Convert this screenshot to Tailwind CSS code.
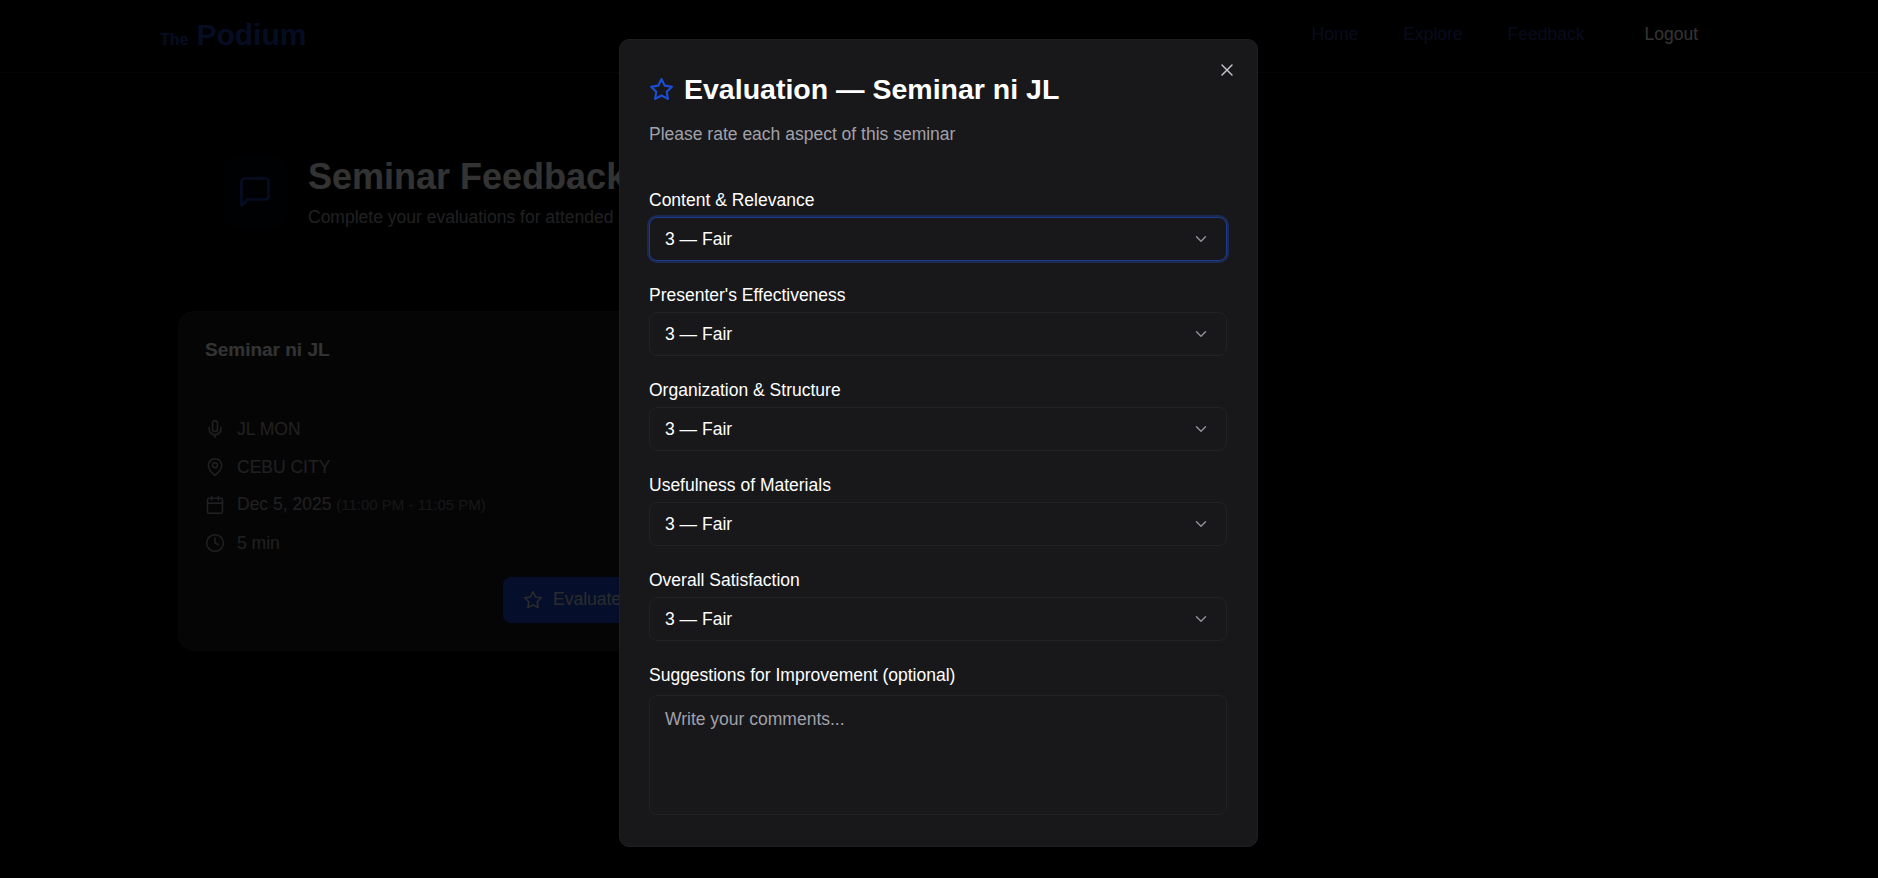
<!DOCTYPE html>
<html lang="en">
<head>
<meta charset="utf-8"/>
<title>Seminar Feedback - The Podium</title>
<script src="https://cdn.jsdelivr.net/npm/@tailwindcss/browser@4"></script>
</head>
<body class="relative h-[878px] overflow-hidden bg-black font-['Liberation_Sans',Arial,sans-serif] text-white">

<!-- page behind the dialog -->
<header class="h-[73px] border-b border-[#1c1c1f] pl-[160px] pr-[180px] flex items-center justify-between">
  <div class="flex items-baseline gap-[8px] font-bold text-[#1e40af]">
    <span class="text-[16px]">The</span>
    <span class="text-[30px] leading-none">Podium</span>
  </div>
  <nav class="flex items-center text-[17.5px] -mt-[3px]">
    <a class="text-[#1e3a8a]">Home</a>
    <a class="ml-[45px] text-[#1e3a8a]">Explore</a>
    <a class="ml-[45px] text-[#1e3a8a]">Feedback</a>
    <a class="ml-[60px] text-white">Logout</a>
  </nav>
</header>

<main class="pl-[178px]">
  <div class="mt-[82px] ml-[45px] flex items-center gap-[21px]">
    <div class="w-[64px] h-[70px] rounded-xl bg-[#1e3a8a]/10 flex items-center justify-center">
      <svg class="w-[36px] h-[36px] text-[#1e40af]" viewBox="0 0 24 24" fill="none" stroke="currentColor" stroke-width="1.8" stroke-linecap="round" stroke-linejoin="round"><path d="M21 15a2 2 0 0 1-2 2H7l-4 4V5a2 2 0 0 1 2-2h14a2 2 0 0 1 2 2z"/></svg>
    </div>
    <div>
      <h1 class="mb-[6px] text-[36px] leading-[44px] font-bold">Seminar Feedback</h1>
      <p class="text-[17.5px] leading-[24px] text-[#a1a1aa]">Complete your evaluations for attended seminars</p>
    </div>
  </div>

  <section class="mt-[82px] w-[520px] h-[340px] rounded-2xl border border-[#27272a] bg-[#1c1c1f] px-[26px] pt-[25px]">
    <h2 class="text-[19px] leading-[26px] font-bold">Seminar ni JL</h2>
    <ul class="mt-[54px] flex flex-col gap-[13.5px] text-[17.5px] leading-[24px] text-[#a1a1aa]">
      <li class="flex items-center gap-[12px]">
        <svg class="w-[20px] h-[20px]" viewBox="0 0 24 24" fill="none" stroke="currentColor" stroke-width="1.8" stroke-linecap="round" stroke-linejoin="round"><rect x="9" y="2" width="6" height="13" rx="3"/><path d="M19 10v2a7 7 0 0 1-14 0v-2M12 19v3"/></svg>
        <span>JL MON</span>
      </li>
      <li class="flex items-center gap-[12px]">
        <svg class="w-[20px] h-[20px]" viewBox="0 0 24 24" fill="none" stroke="currentColor" stroke-width="1.8" stroke-linecap="round" stroke-linejoin="round"><path d="M20 10c0 6-8 12-8 12s-8-6-8-12a8 8 0 0 1 16 0Z"/><circle cx="12" cy="10" r="3"/></svg>
        <span>CEBU CITY</span>
      </li>
      <li class="flex items-center gap-[12px]">
        <svg class="w-[20px] h-[20px]" viewBox="0 0 24 24" fill="none" stroke="currentColor" stroke-width="1.8" stroke-linecap="round" stroke-linejoin="round"><rect x="3" y="4" width="18" height="18" rx="2"/><path d="M16 2v4M8 2v4M3 10h18"/></svg>
        <span>Dec 5, 2025 <span class="text-[15px] text-[#71717a]">(11:00 PM - 11:05 PM)</span></span>
      </li>
      <li class="flex items-center gap-[12px]">
        <svg class="w-[20px] h-[20px]" viewBox="0 0 24 24" fill="none" stroke="currentColor" stroke-width="1.8" stroke-linecap="round" stroke-linejoin="round"><circle cx="12" cy="12" r="10"/><path d="M12 6v6l4 2"/></svg>
        <span>5 min</span>
      </li>
    </ul>
    <div class="mt-[22px] ml-[298px] h-[46px] w-[180px] rounded-lg bg-[#1d4ed8] flex items-center gap-[10px] pl-[20px] text-[17.5px] text-[#d4d4d8]">
      <svg class="w-[20px] h-[20px]" viewBox="0 0 24 24" fill="none" stroke="currentColor" stroke-width="1.8" stroke-linecap="round" stroke-linejoin="round"><path d="M12 2l3.09 6.26L22 9.27l-5 4.87 1.18 6.88L12 17.77l-6.18 3.25L7 14.14 2 9.27l6.91-1.01z"/></svg>
      <span>Evaluate</span>
    </div>
  </section>
</main>

<div class="absolute inset-0 bg-black/80"></div>

<!-- dialog -->
<div class="absolute left-[619px] top-[39px] w-[639px] h-[808px] rounded-[10px] border border-[#1f1f22] bg-[#18181b] pl-[29px] pr-[30px] pt-[28px]">
  <button class="absolute right-[20px] top-[20px] text-[#c4c4ca]">
    <svg class="w-[20px] h-[20px]" viewBox="0 0 24 24" fill="none" stroke="currentColor" stroke-width="1.7" stroke-linecap="round" stroke-linejoin="round"><path d="M18 6 6 18M6 6l12 12"/></svg>
  </button>
  <div class="flex items-center gap-[10px]">
    <svg class="w-[25px] h-[25px] text-[#1d4ed8]" viewBox="0 0 24 24" fill="none" stroke="currentColor" stroke-width="2" stroke-linecap="round" stroke-linejoin="round"><path d="M12 2l3.09 6.26L22 9.27l-5 4.87 1.18 6.88L12 17.77l-6.18 3.25L7 14.14 2 9.27l6.91-1.01z"/></svg>
    <h2 class="text-[28.5px] leading-[42px] font-bold">Evaluation — Seminar ni JL</h2>
  </div>
  <p class="mt-[12px] text-[17.5px] leading-[24px] text-[#a1a1aa]">Please rate each aspect of this seminar</p>

  <form class="mt-[42px] flex flex-col gap-[22px] text-[17.5px]">
    <div>
      <label class="block leading-[24px]">Content &amp; Relevance</label>
      <div class="relative mt-[5px]">
        <select class="appearance-none w-full h-[44px] rounded-lg bg-[#18181b] pl-[15px] border border-[#1e3a8a] ring-2 ring-[#1e3a8a]/50"><option>3 — Fair</option></select>
        <svg class="absolute right-[17px] top-[13px] w-[18px] h-[18px] text-[#8f8f97]" viewBox="0 0 24 24" fill="none" stroke="currentColor" stroke-width="2" stroke-linecap="round" stroke-linejoin="round"><path d="m6 9 6 6 6-6"/></svg>
      </div>
    </div>
    <div>
      <label class="block leading-[24px]">Presenter's Effectiveness</label>
      <div class="relative mt-[5px]">
        <select class="appearance-none w-full h-[44px] rounded-lg bg-[#18181b] pl-[15px] border border-[#222225]"><option>3 — Fair</option></select>
        <svg class="absolute right-[17px] top-[13px] w-[18px] h-[18px] text-[#8f8f97]" viewBox="0 0 24 24" fill="none" stroke="currentColor" stroke-width="2" stroke-linecap="round" stroke-linejoin="round"><path d="m6 9 6 6 6-6"/></svg>
      </div>
    </div>
    <div>
      <label class="block leading-[24px]">Organization &amp; Structure</label>
      <div class="relative mt-[5px]">
        <select class="appearance-none w-full h-[44px] rounded-lg bg-[#18181b] pl-[15px] border border-[#222225]"><option>3 — Fair</option></select>
        <svg class="absolute right-[17px] top-[13px] w-[18px] h-[18px] text-[#8f8f97]" viewBox="0 0 24 24" fill="none" stroke="currentColor" stroke-width="2" stroke-linecap="round" stroke-linejoin="round"><path d="m6 9 6 6 6-6"/></svg>
      </div>
    </div>
    <div>
      <label class="block leading-[24px]">Usefulness of Materials</label>
      <div class="relative mt-[5px]">
        <select class="appearance-none w-full h-[44px] rounded-lg bg-[#18181b] pl-[15px] border border-[#222225]"><option>3 — Fair</option></select>
        <svg class="absolute right-[17px] top-[13px] w-[18px] h-[18px] text-[#8f8f97]" viewBox="0 0 24 24" fill="none" stroke="currentColor" stroke-width="2" stroke-linecap="round" stroke-linejoin="round"><path d="m6 9 6 6 6-6"/></svg>
      </div>
    </div>
    <div>
      <label class="block leading-[24px]">Overall Satisfaction</label>
      <div class="relative mt-[5px]">
        <select class="appearance-none w-full h-[44px] rounded-lg bg-[#18181b] pl-[15px] border border-[#222225]"><option>3 — Fair</option></select>
        <svg class="absolute right-[17px] top-[13px] w-[18px] h-[18px] text-[#8f8f97]" viewBox="0 0 24 24" fill="none" stroke="currentColor" stroke-width="2" stroke-linecap="round" stroke-linejoin="round"><path d="m6 9 6 6 6-6"/></svg>
      </div>
    </div>
    <div>
      <label class="block leading-[24px]">Suggestions for Improvement (optional)</label>
      <textarea class="mt-[8px] block w-full h-[120px] rounded-lg bg-[#18181b] border border-[#222225] px-[15px] py-[10px] resize-none placeholder:text-[#a1a1aa]" placeholder="Write your comments..."></textarea>
    </div>
  </form>
</div>
</body>
</html>
